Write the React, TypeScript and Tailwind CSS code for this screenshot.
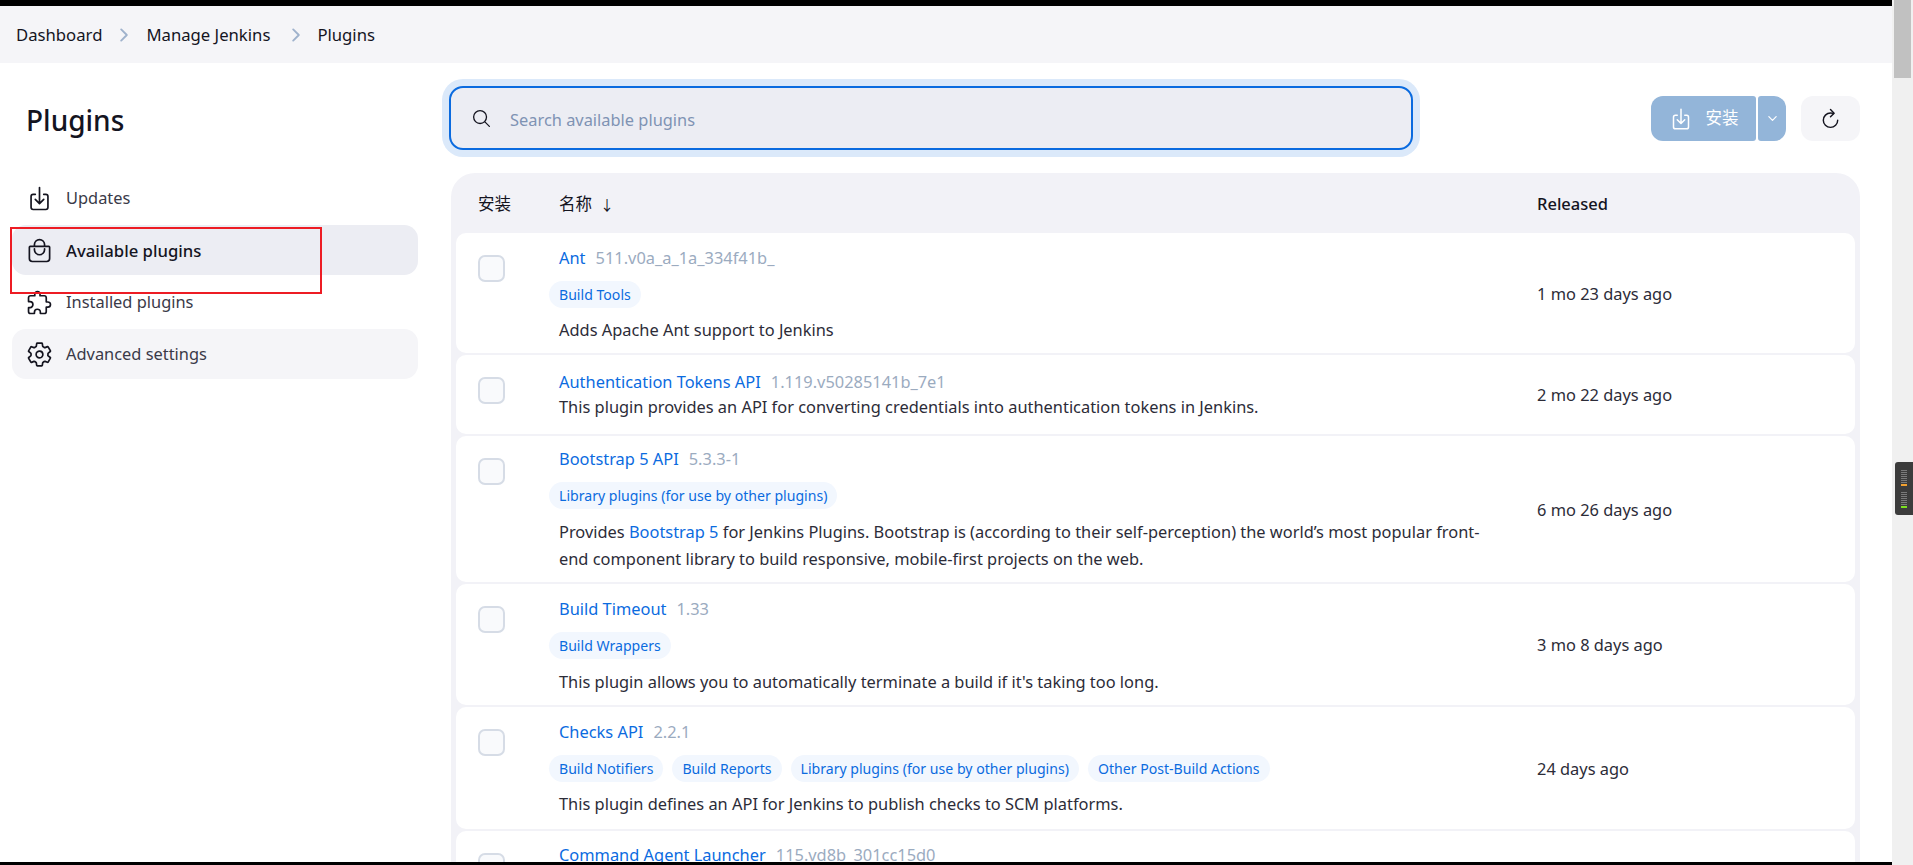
import { IoDownloadOutline, IoBagHandleOutline, IoExtensionPuzzleOutline, IoSettingsOutline, IoRefreshOutline, IoSearchOutline, IoChevronForward, IoChevronDown } from "react-icons/io5";

const font = '"Noto Sans", "Noto Sans CJK SC", sans-serif';

function Tag({ children }: { children: string }) {
  return <span className="h-[27px] px-[10px] rounded-full bg-[#f2f7fe] text-[#0b6bdf] text-[14.1px] leading-[27px] whitespace-nowrap">{children}</span>;
}

function Row({ name, version, tags, desc, released, h, pt, descCls = "" }: { name: string; version: string; tags?: string[]; desc: React.ReactNode; released: string; h: string; pt: string; descCls?: string }) {
  return (
    <div className={`flex bg-white rounded-[10px] shrink-0 ${h}`}>
      <div className="w-[103px] shrink-0 pl-[22px] pt-[22px]">
        <div className="w-[27px] h-[27px] rounded-[7px] border-2 border-[#d6dce6] bg-[#f9fafc]" />
      </div>
      <div className={`w-[978px] shrink-0 ${pt}`}>
        <div className="flex items-baseline gap-[10px] h-[25px] leading-[25px]">
          <span className="text-[#0b6bdf] text-[16.4px]">{name}</span>
          <span className="text-[#9babbf] text-[16.4px]">{version}</span>
        </div>
        {tags && (
          <div className="flex gap-[9px] -ml-[10px] mt-[11px] mb-[8px]">
            {tags.map((t) => <Tag key={t}>{t}</Tag>)}
          </div>
        )}
        <div className={`text-[#2c2c38] text-[16.4px] leading-[27px] pr-[30px] ${descCls}`}>{desc}</div>
      </div>
      <div className="flex items-center text-[#2c2c38] text-[16.4px] pt-[2px]">{released}</div>
    </div>
  );
}

function NavItem({ icon, label, cls, text }: { icon: React.ReactNode; label: string; cls: string; text: string }) {
  return (
    <div className={`flex items-center h-[50px] rounded-[14px] pl-[14px] ${cls}`}>
      <span className="w-[40px] text-[#14141f] text-[27px] flex shrink-0">{icon}</span>
      <span className={`pt-[1px] ${text}`}>{label}</span>
    </div>
  );
}

export default function App() {
  return (
    <div className="relative flex h-[865px] w-[1913px] overflow-hidden bg-white" style={{ fontFamily: font }}>
      <div className="flex flex-col w-[1892px] shrink-0">
        <div className="h-[6px] bg-black shrink-0" />
        <div className="h-[57px] bg-[#f5f5f8] flex items-center pl-[16px] text-[16.7px] text-[#14141f] shrink-0">
          <span>Dashboard</span>
          <IoChevronForward className="text-[#9fb2cc] text-[20px] mx-[12px]" />
          <span>Manage Jenkins</span>
          <IoChevronForward className="text-[#9fb2cc] text-[20px] ml-[16px] mr-[11px]" />
          <span>Plugins</span>
        </div>
        <div className="flex flex-1 min-h-0">
          <aside className="w-[451px] shrink-0 pl-[12px] pr-[33px]">
            <h1 className="text-[28px] leading-[38px] font-medium text-[#14141f] pl-[14px] mt-[38px] mb-[34px]">Plugins</h1>
            <div className="flex flex-col gap-[2px]">
              <NavItem icon={<IoDownloadOutline />} label="Updates" cls="" text="text-[16.4px] text-[#3a3a48]" />
              <NavItem icon={<IoBagHandleOutline />} label="Available plugins" cls="bg-[#ecedf3]" text="text-[16.7px] text-[#14141f] font-medium" />
              <NavItem icon={<IoExtensionPuzzleOutline />} label="Installed plugins" cls="" text="text-[16.4px] text-[#3a3a48]" />
              <NavItem icon={<IoSettingsOutline />} label="Advanced settings" cls="bg-[#f5f5f8]" text="text-[16.4px] text-[#3a3a48]" />
            </div>
          </aside>
          <main className="w-[1409px] shrink-0 flex flex-col">
            <div className="flex justify-between mt-[23px]">
              <div className="w-[964px] h-[64px] -ml-[2px] flex items-center rounded-[14px] border-2 border-[#0b6bdf] bg-[#ecedf3] ring-[7px] ring-[#dbe9fa] pl-[20px]">
                <IoSearchOutline className="text-[#14141f] text-[21px] mr-[18px]" />
                <span className="text-[#7f93b3] text-[16.4px] pt-[5px]">Search available plugins</span>
              </div>
              <div className="flex mt-[10px] h-[45px]">
                <div className="w-[105px] flex items-center justify-center gap-[13px] bg-[#93b5d9] rounded-l-[12px] rounded-r-[3px] text-white text-[16.5px]">
                  <IoDownloadOutline className="text-[24px]" />
                  <span>安装</span>
                </div>
                <div className="w-[28px] ml-[2px] flex items-center justify-center bg-[#93b5d9] rounded-r-[12px] rounded-l-[3px] text-white text-[13px]">
                  <IoChevronDown />
                </div>
                <div className="w-[59px] ml-[15px] flex items-center justify-center bg-[#f5f5f8] rounded-[12px] text-[#14141f] text-[23px]">
                  <IoRefreshOutline />
                </div>
              </div>
            </div>
            <div className="mt-[23px] flex-1 min-h-0 bg-[#f2f2f7] rounded-t-[24px] px-[5px] overflow-hidden flex flex-col">
              <div className="h-[60px] flex items-center shrink-0 text-[#14141f] text-[16.5px] pt-[2px]">
                <span className="w-[103px] pl-[22px]">安装</span>
                <span className="w-[978px] flex items-center">名称<span className="ml-[8px] text-[14px]">↓</span></span>
                <span className="font-medium">Released</span>
              </div>
              <div className="flex flex-col gap-[2px]">
                <Row h="h-[120px]" pt="pt-[12px]" name="Ant" version="511.v0a_a_1a_334f41b_" tags={["Build Tools"]} desc="Adds Apache Ant support to Jenkins" released="1 mo 23 days ago" />
                <Row h="h-[79px]" pt="pt-[14px]" descCls="-mt-[1px]" name="Authentication Tokens API" version="1.119.v50285141b_7e1" desc="This plugin provides an API for converting credentials into authentication tokens in Jenkins." released="2 mo 22 days ago" />
                <Row h="h-[146px]" pt="pt-[10px]" descCls="pt-[1px]" name="Bootstrap 5 API" version="5.3.3-1" tags={["Library plugins (for use by other plugins)"]} desc={<>Provides <span className="text-[#0b6bdf]">Bootstrap 5</span> for Jenkins Plugins. Bootstrap is (according to their self-perception) the world’s most popular front-end component library to build responsive, mobile-first projects on the web.</>} released="6 mo 26 days ago" />
                <Row h="h-[121px]" pt="pt-[12px]" descCls="pt-[1px]" name="Build Timeout" version="1.33" tags={["Build Wrappers"]} desc="This plugin allows you to automatically terminate a build if it's taking too long." released="3 mo 8 days ago" />
                <Row h="h-[122px]" pt="pt-[12px]" name="Checks API" version="2.2.1" tags={["Build Notifiers", "Build Reports", "Library plugins (for use by other plugins)", "Other Post-Build Actions"]} desc="This plugin defines an API for Jenkins to publish checks to SCM platforms." released="24 days ago" />
                <Row h="h-[80px]" pt="pt-[11px]" name="Command Agent Launcher" version="115.vd8b_301cc15d0" desc="" released="" />
              </div>
            </div>
            <div className="h-[3px] bg-black shrink-0 -ml-[451px] w-[1892px]" />
          </main>
        </div>
      </div>
      <div className="w-[21px] shrink-0 bg-[#f0f0f0] px-[2px]">
        <div className="h-[78px] bg-[#c1c1c1]" />
      </div>
      <div className="absolute left-[10px] top-[227px] w-[312px] h-[67px] border-2 border-[#ed1c24]" />
      <div className="absolute left-[1895px] top-[462px] w-[18px] h-[53px] bg-[#3c3c3c] rounded-l-[3px] flex flex-col items-center justify-center">
        <div className="flex flex-col gap-[1px] mb-[6px]">
          {[0,1,2,3,4,5,6].map((i) => <div key={i} className="w-[6px] h-[1px] bg-[#7a7a7a]" />)}
          <div className="w-[6px] h-[2px] bg-[#f0a030]" />
        </div>
        <div className="flex flex-col gap-[1px]">
          {[0,1,2,3,4,5,6].map((i) => <div key={i} className="w-[6px] h-[1px] bg-[#7a7a7a]" />)}
          <div className="w-[6px] h-[2px] bg-[#7be020]" />
        </div>
      </div>
    </div>
  );
}
